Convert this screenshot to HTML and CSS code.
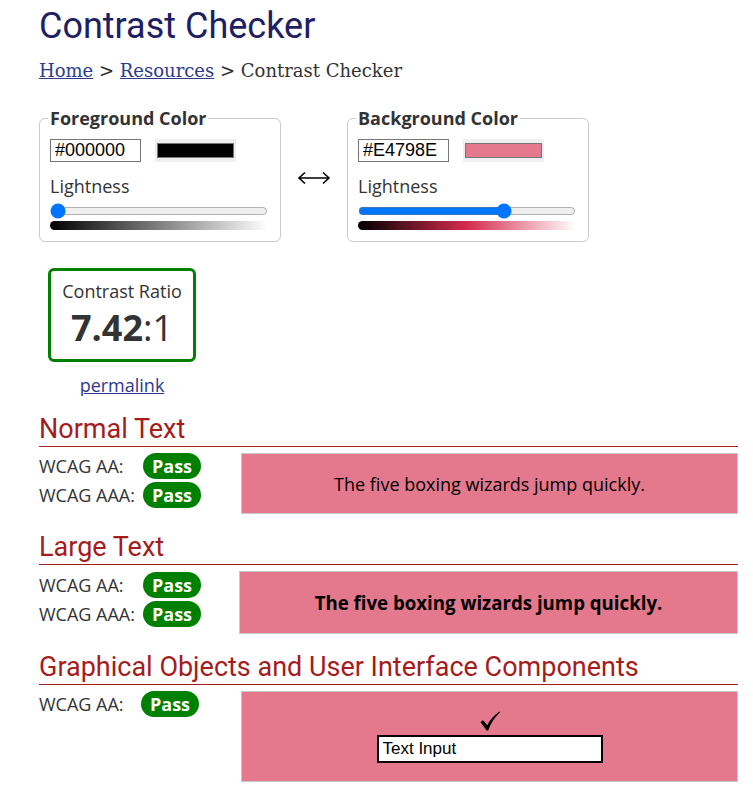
FILE: index.html
```html
<!DOCTYPE html>
<html lang="en">
<head>
    <meta charset="UTF-8">
    <meta name="viewport" content="width=device-width, initial-scale=1.0">
    <title>Contrast Checker</title>
    <link rel="stylesheet" href="styles.css">
</head>
<body>
    <div class="page">
        <h1 class="title">Contrast Checker</h1>
        <p class="crumbs"><a href="#">Home</a> &gt; <a href="#">Resources</a> &gt; Contrast Checker</p>

        <div class="pickers">
            <fieldset class="picker">
                <legend>Foreground Color</legend>
                <div class="color-row">
                    <input class="hex" type="text" value="#000000">
                    <span class="swatch"><span class="swatch-fill swatch-fg"></span></span>
                </div>
                <label class="light-label">Lightness</label>
                <input class="light" type="range" min="0" max="100" step="0.1" value="0">
                <div class="ramp ramp-fg"></div>
            </fieldset>

            <div class="swap">
                <svg width="34" height="14" viewBox="0 0 34 14">
                    <path d="M2 7 H32 M8 1.5 L2 7 L8 12.5 M26 1.5 L32 7 L26 12.5" fill="none" stroke="#000" stroke-width="1.6"/>
                </svg>
            </div>

            <fieldset class="picker">
                <legend>Background Color</legend>
                <div class="color-row">
                    <input class="hex" type="text" value="#E4798E">
                    <span class="swatch"><span class="swatch-fill swatch-bg"></span></span>
                </div>
                <label class="light-label">Lightness</label>
                <input class="light" type="range" min="0" max="100" step="0.1" value="68.4">
                <div class="ramp ramp-bg"></div>
            </fieldset>
        </div>

        <div class="ratio-wrap">
            <div class="ratio-box">
                <div class="ratio-label">Contrast Ratio</div>
                <div class="ratio-value"><b>7.42</b>:1</div>
            </div>
            <a class="permalink" href="#">permalink</a>
        </div>

        <section class="result result-first">
            <h2>Normal Text</h2>
            <div class="result-body">
                <div class="checks">
                    <div class="check"><span class="check-label">WCAG AA:</span><span class="pill">Pass</span></div>
                    <div class="check"><span class="check-label">WCAG AAA:</span><span class="pill">Pass</span></div>
                </div>
                <div class="sample">The five boxing wizards jump quickly.</div>
            </div>
        </section>

        <section class="result">
            <h2>Large Text</h2>
            <div class="result-body">
                <div class="checks checks-large">
                    <div class="check"><span class="check-label">WCAG AA:</span><span class="pill">Pass</span></div>
                    <div class="check"><span class="check-label">WCAG AAA:</span><span class="pill">Pass</span></div>
                </div>
                <div class="sample sample-large">The five boxing wizards jump quickly.</div>
            </div>
        </section>

        <section class="result">
            <h2>Graphical Objects and User Interface Components</h2>
            <div class="result-body">
                <div class="checks checks-ui">
                    <div class="check"><span class="check-label">WCAG AA:</span><span class="pill">Pass</span></div>
                </div>
                <div class="sample sample-ui">
                    <svg class="tick" width="20" height="20" viewBox="0 0 20 20">
                        <path d="M0.5 11 L3 9.3 L7.3 14.2 C10 8.8 14 4.2 19.4 0.6 L20 1.3 C15 5.8 11.2 11.6 8.2 19.4 L6.6 19.4 Z" fill="#000"/>
                    </svg>
                    <input class="ui-input" type="text" value="Text Input">
                </div>
            </div>
        </section>
    </div>
</body>
</html>
```

FILE: styles.css
```css
* {
    box-sizing: border-box;
}
body {
    margin: 0;
    background: #fff;
    color: #333;
    font-family: 'Open Sans', sans-serif;
    font-size: 18px;
}
.page {
    width: 753px;
    padding: 5px 15px 20px 39px;
}
.title {
    margin: 0;
    font-family: Roboto, sans-serif;
    font-weight: 400;
    font-size: 36px;
    line-height: 42px;
    color: #1e2062;
}
.crumbs {
    margin: 13px 0 0;
    font-family: 'DejaVu Serif', serif;
    font-size: 18px;
    line-height: 21px;
    color: #333;
}
.crumbs a, .permalink {
    color: #2c3a8c;
}

/* colour pickers */
.pickers {
    display: flex;
    align-items: center;
    margin-top: 25px;
}
.picker {
    width: 242px;
    margin: 0;
    padding: 9px 10px 11px;
    border: 1px solid #cbcbcb;
    border-radius: 6px;
}
.picker legend {
    padding: 0 2px;
    margin-left: -2px;
    font-weight: 700;
    font-size: 18px;
    color: #333;
}
.color-row {
    display: flex;
    align-items: center;
    gap: 14px;
}
.hex {
    width: 91px;
    height: 23px;
    margin: 0;
    padding: 0 4px;
    border: 1px solid #767676;
    border-radius: 0;
    font-family: 'Liberation Sans', Arial, sans-serif;
    font-size: 18px;
    color: #000;
}
.swatch {
    display: block;
    padding: 4px 2px;
    background: #efefef;
}
.swatch-fill {
    display: block;
    width: 77px;
    height: 15px;
    border: 1px solid #777;
}
.swatch-fg {
    background: #000;
}
.swatch-bg {
    background: #e4798e;
}
.light-label {
    display: block;
    margin-top: 12px;
    line-height: 24px;
}
.light {
    display: block;
    width: 218px;
    margin: 5px 0 0;
}
.ramp {
    width: 218px;
    height: 9px;
    margin-top: 2px;
    border-radius: 5px 0 0 5px;
}
.ramp-fg {
    background: linear-gradient(to right, #000, #fff);
}
.ramp-bg {
    background: linear-gradient(to right, hsl(348, 66%, 0%), hsl(348, 66%, 50%), hsl(348, 66%, 100%));
}
.swap {
    display: flex;
    justify-content: center;
    width: 66px;
    padding-top: 8px;
}

/* ratio */
.ratio-wrap {
    display: flex;
    flex-direction: column;
    align-items: center;
    width: 166px;
    margin-top: 26px;
}
.ratio-box {
    padding: 8px 11px 7px;
    border: 3px solid #008000;
    border-radius: 6px;
    text-align: center;
}
.ratio-value {
    font-size: 36px;
    line-height: 49px;
}
.permalink {
    margin-top: 11px;
}

/* results */
.result {
    margin-top: 18px;
}
.result-first {
    margin-top: 17px;
}
.result h2 {
    margin: 0 0 6px;
    padding-bottom: 1px;
    border-bottom: 1px solid #a51c1c;
    font-family: Roboto, sans-serif;
    font-weight: 400;
    font-size: 27px;
    line-height: 31px;
    color: #a51c1c;
}
.result-body {
    display: flex;
    align-items: flex-start;
}
.checks {
    display: flex;
    flex-direction: column;
    gap: 3px;
    width: 202px;
    flex-shrink: 0;
}
.checks-large {
    width: 200px;
    padding-top: 1px;
}
.check {
    display: flex;
    align-items: center;
}
.check-label {
    width: 104px;
    line-height: 26px;
}
.checks-ui .check-label {
    width: 102px;
}
.pill {
    padding: 0 9px;
    line-height: 26px;
    border-radius: 13px;
    background: #008000;
    color: #fff;
    font-weight: 700;
}
.sample {
    flex: 1;
    display: flex;
    align-items: center;
    justify-content: center;
    height: 61px;
    background: #e4798e;
    border: 1px solid #c8c8c8;
    color: #000;
}
.sample-large {
    height: 63px;
    font-size: 18.66px;
    font-weight: 700;
}
.sample-ui {
    flex-direction: column;
    height: 91px;
}
.tick {
    display: block;
    margin-bottom: 4px;
}
.ui-input {
    width: 226px;
    height: 28px;
    margin: 0;
    padding: 0 4px;
    border: 2px solid #000;
    border-radius: 0;
    background: #fff;
    font-family: 'Liberation Sans', Arial, sans-serif;
    font-size: 17px;
    color: #000;
}
```
